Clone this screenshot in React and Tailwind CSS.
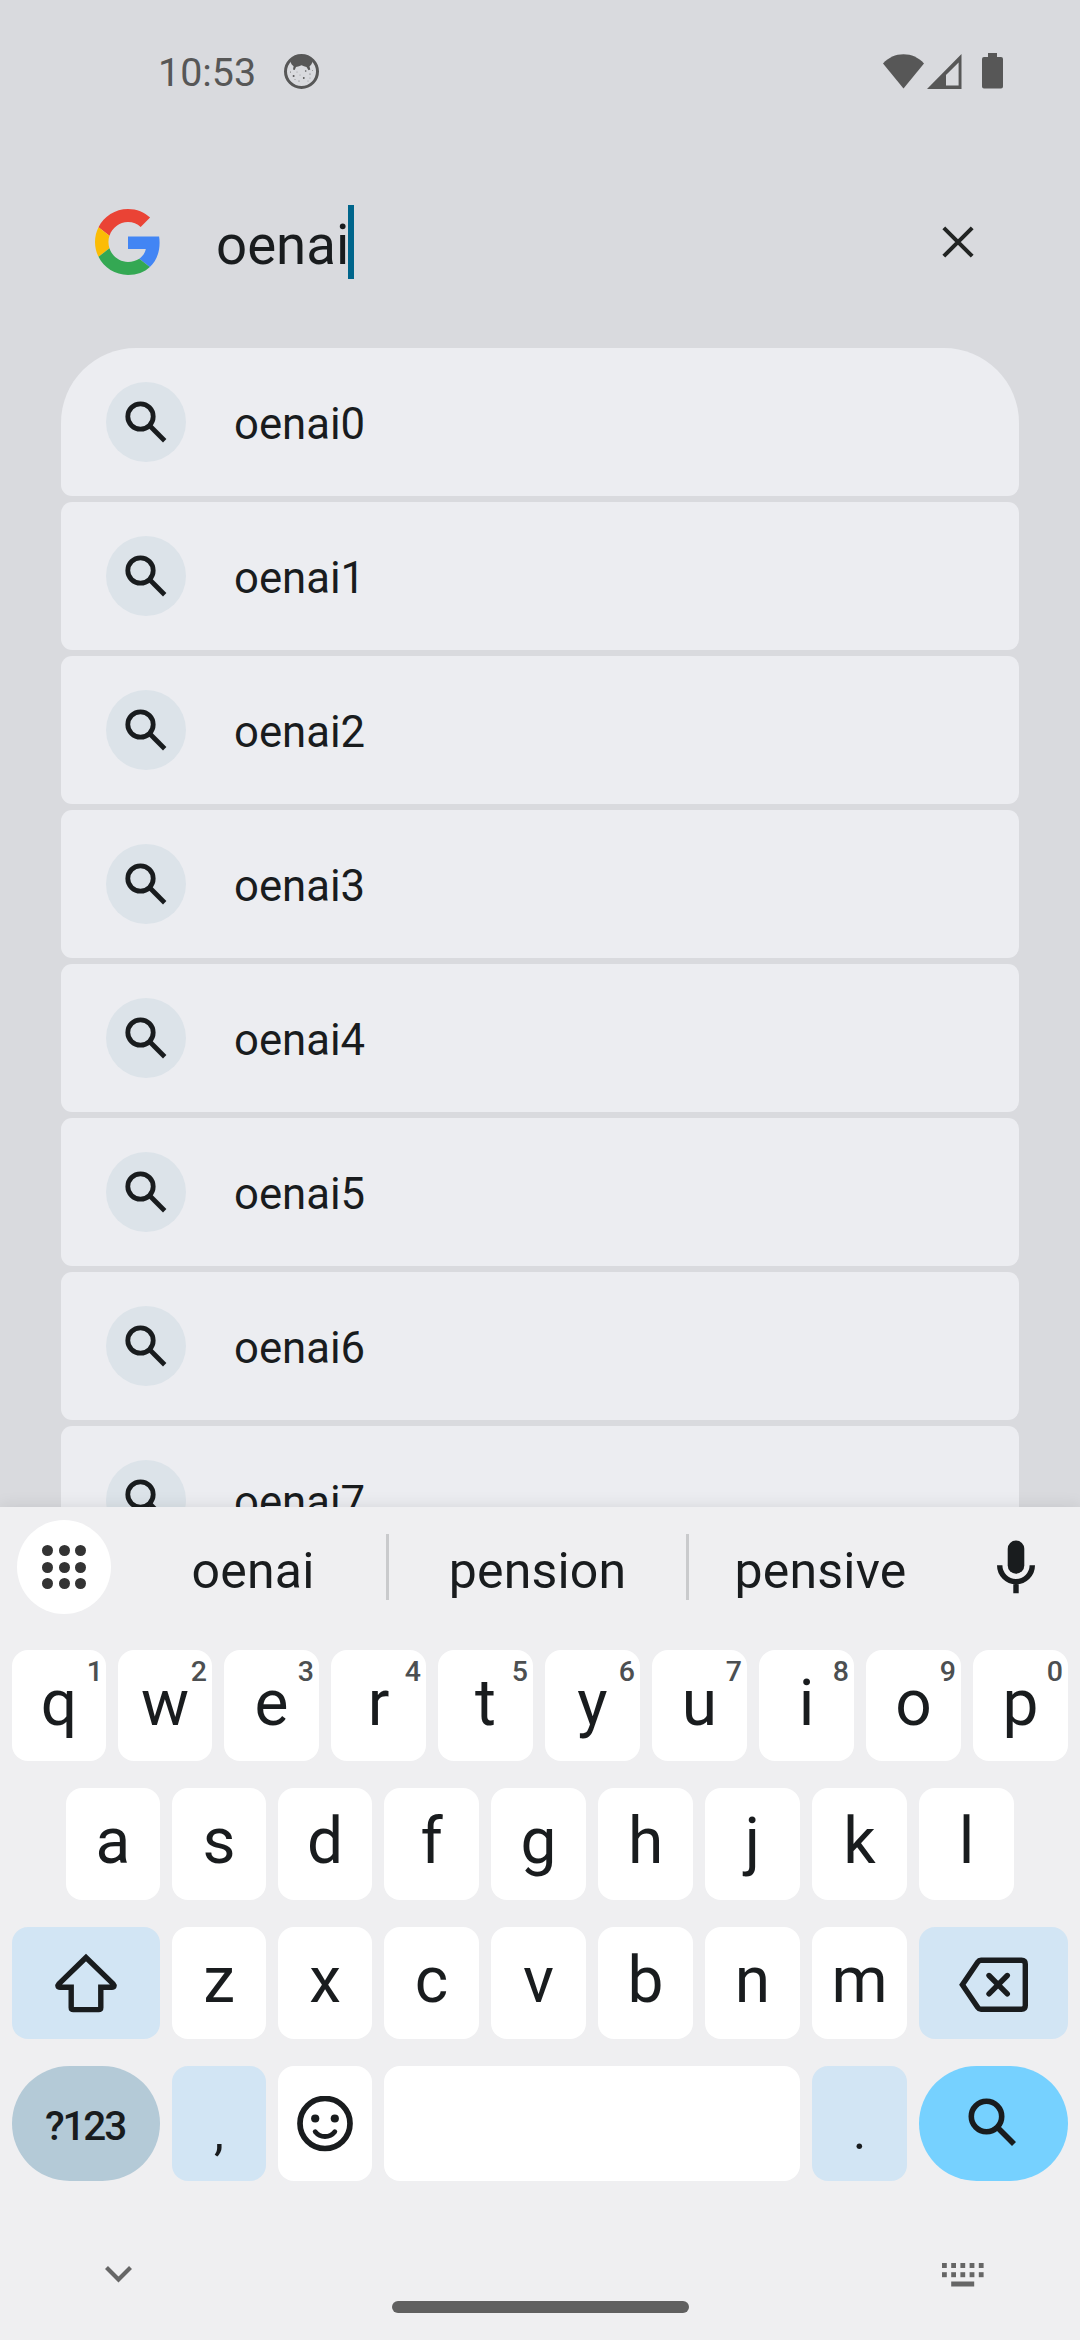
import React from "react";

const ink = "#191c1e";

const suggestions = ["oenai0", "oenai1", "oenai2", "oenai3", "oenai4", "oenai5", "oenai6", "oenai7"];

const topRow = [
  ["q", "1"], ["w", "2"], ["e", "3"], ["r", "4"], ["t", "5"],
  ["y", "6"], ["u", "7"], ["i", "8"], ["o", "9"], ["p", "0"],
];
const homeRow = ["a", "s", "d", "f", "g", "h", "j", "k", "l"];
const bottomRow = ["z", "x", "c", "v", "b", "n", "m"];

function StatusBar() {
  return (
    <div className="flex h-[142px] shrink-0 items-center pl-[158px] pr-[77px]">
      <span className="w-[126px] pt-[3px] text-[39.4px] leading-none text-[#575757]">10:53</span>
      <svg className="size-[35px]" viewBox="0 0 35 35">
        <circle cx="17.5" cy="17.5" r="16" fill="none" stroke="#575757" strokeWidth="3" />
        <path d="M6.500 8C9 3 13 1.500 17.500 1.500S26 3 28.500 8L27.300 10.500 25.500 12.500 26.300 15.500 24.500 16.200 22.500 13 20 12.200 17.500 11.200 15 12.200 12 13 10.700 16 9 15.500 9.600 12.200 7.700 10.500Z" fill="#575757" />
        <g fill="#575757">
          <circle cx="9.600" cy="22" r="1" /><circle cx="21.700" cy="17" r="0.800" />
          <circle cx="19.800" cy="24" r="0.900" /><circle cx="13" cy="18" r="0.400" />
          <circle cx="16" cy="21" r="0.400" /><circle cx="26" cy="20" r="0.600" />
          <circle cx="15" cy="27" r="0.500" /><circle cx="24" cy="27" r="0.400" />
          <circle cx="6.500" cy="18" r="0.500" /><circle cx="11" cy="25.500" r="0.400" />
          <circle cx="26" cy="24" r="0.400" /><circle cx="28.500" cy="16.500" r="0.400" />
        </g>
      </svg>
      <div className="grow" />
      <svg className="h-[35px] w-[41px]" viewBox="0 0 41 35" fill="#575757">
        <path d="M20.500 34.500 0 9.500C5.500 3.500 12.500 0.300 20.500 0.300S35.500 3.500 41 9.500Z" />
      </svg>
      <svg className="ml-[3px] h-[35px] w-[35px]" viewBox="0 0 35 35" fill="#575757">
        <path fillRule="evenodd" d="M34.500 0V35H0ZM31.600 8.500 19 21V31.500H31.600Z" />
      </svg>
      <svg className="ml-5 h-9 w-[21px]" viewBox="0 0 21 36" fill="#575757">
        <path d="M6 0h9v4h4a2 2 0 0 1 2 2v27.500a2 2 0 0 1-2 2H2a2 2 0 0 1-2-2V6a2 2 0 0 1 2-2h4z" />
      </svg>
    </div>
  );
}

function GoogleLogo() {
  return (
    <svg className="size-[66px]" viewBox="0 0 48 48">
      <path fill="#EA4335" d="M24 9.500c3.540 0 6.710 1.220 9.210 3.600l6.850-6.850C35.900 2.380 30.470 0 24 0 14.620 0 6.510 5.380 2.560 13.220l7.980 6.190C12.430 13.720 17.740 9.500 24 9.500z" />
      <path fill="#4285F4" d="M46.980 24.550c0-1.570-.15-3.090-.38-4.550H24v9.020h12.940c-.58 2.960-2.260 5.480-4.780 7.180l7.730 6c4.510-4.180 7.090-10.360 7.090-17.650z" />
      <path fill="#FBBC05" d="M10.530 28.590c-.48-1.450-.76-2.990-.76-4.590s.27-3.140.76-4.590l-7.980-6.190C.92 16.460 0 20.120 0 24c0 3.880.92 7.540 2.560 10.780l7.970-6.190z" />
      <path fill="#34A853" d="M24 48c6.480 0 11.930-2.130 15.890-5.810l-7.730-6c-2.150 1.450-4.920 2.300-8.160 2.300-6.260 0-11.570-4.220-13.470-9.910l-7.980 6.190C6.510 42.620 14.620 48 24 48z" />
    </svg>
  );
}

function SearchBar() {
  return (
    <div className="mb-[6px] flex h-[200px] shrink-0 items-center pl-[95px] pr-[106px]">
      <GoogleLogo />
      <div className="ml-[55px] flex grow items-center">
        <span className="pt-[7px] text-[54.6px] leading-none text-[#191c1e]">oenai</span>
        <span className="-ml-px h-[74px] w-[6px] bg-[#00658b]" />
      </div>
      <svg className="mb-px size-8" viewBox="0 0 32 32" stroke="#222423" strokeWidth="4">
        <path d="M1.800 1.800 30.200 30.200M30.200 1.800 1.800 30.200" />
      </svg>
    </div>
  );
}

function Suggestion({ text, first }) {
  return (
    <div className={`flex h-[148px] shrink-0 items-center bg-[#ecedf1] pl-[45px] ${first ? "rounded-b-[11px] rounded-t-[75px]" : "rounded-[11px]"}`}>
      <div className="flex size-20 items-center justify-center rounded-full bg-[#dce3e9]">
        <svg className="size-[42px]" viewBox="0 0 42 42" fill="none" stroke={ink} strokeWidth="4.800">
          <circle cx="15.500" cy="15.500" r="12.700" />
          <path d="M24.500 24.500 39.700 39.700" />
        </svg>
      </div>
      <span className="ml-12 pt-[6px] text-[43.700px] leading-none text-[#191c1e]">{text}</span>
    </div>
  );
}

function SuggestionStrip() {
  const word = "flex items-center justify-center pt-2 text-[50px] leading-none tracking-[0.2px] text-[#191c1e]";
  return (
    <div className="flex h-[120px] shrink-0 items-center pl-[17px]">
      <div className="mr-[9px] flex size-[94px] items-center justify-center rounded-full bg-white">
        <div className="grid grid-cols-3 gap-[5.5px]">
          {Array.from({ length: 9 }, (_, i) => (
            <span key={i} className="size-[11px] rounded-full bg-[#333333]" />
          ))}
        </div>
      </div>
      <div className={`w-[266px] ${word}`}>oenai</div>
      <div className="h-[66px] w-[3px] bg-[#c9cacc]" />
      <div className={`w-[297px] ${word}`}>pension</div>
      <div className="h-[66px] w-[3px] bg-[#c9cacc]" />
      <div className={`w-[263px] ${word}`}>pensive</div>
      <svg className="ml-[45px] h-[54px] w-[38px]" viewBox="0 0 38 54" fill="none" stroke={ink}>
        <rect x="10.700" y="0.500" width="16.600" height="33.300" rx="8.300" fill={ink} stroke="none" />
        <path d="M2.700 25.300a16.300 16.300 0 0 0 32.600 0M19 41v12.300" strokeWidth="5.400" />
      </svg>
    </div>
  );
}

function LetterKey({ label, hint, narrow }) {
  return (
    <div className={`relative flex shrink-0 items-center justify-center rounded-2xl bg-white ${narrow ? "w-[94px]" : "w-[95px]"}`}>
      <span className="-mt-1 text-[64px] leading-none text-[#191c1e]">{label}</span>
      {hint && (
        <span className={`absolute top-2 text-[28.500px] font-medium leading-none text-[#4c4f51] ${hint === "1" ? "right-[3px]" : "right-[5px]"}`}>{hint}</span>
      )}
    </div>
  );
}

function Keyboard() {
  return (
    <div className="relative flex grow flex-col bg-[#efeff1] shadow-[0_0_16px_rgba(0,0,0,0.1)]">
      <SuggestionStrip />
      <div className="mt-[23px] flex h-[111px] gap-3 px-3">
        {topRow.map(([label, hint], i) => <LetterKey key={label} label={label} hint={hint} narrow={i < 2} />)}
      </div>
      <div className="mt-[27px] flex h-[112px] gap-3 px-[66px]">
        {homeRow.map((label, i) => <LetterKey key={label} label={label} narrow={i < 3} />)}
      </div>
      <div className="mt-[27px] flex h-[112px] gap-3 px-3">
        <div className="flex w-[148px] items-center justify-center rounded-2xl bg-[#d2e5f4]">
          <svg className="h-[60px] w-16" viewBox="0 0 64 60" fill="none" stroke={ink} strokeWidth="5.400">
            <path d="M32 4.500 4.900 30.800C3 32.800 4 34.300 6 34.300H17.200V54.500Q17.200 56.600 19.300 56.600H44.700Q46.800 56.600 46.800 54.500V34.300H58C60 34.300 61 32.800 59.100 30.800Z" />
          </svg>
        </div>
        {bottomRow.map((label, i) => <LetterKey key={label} label={label} narrow={i < 2} />)}
        <div className="flex w-[149px] items-center justify-center rounded-2xl bg-[#d2e5f4] pt-1">
          <svg className="h-14 w-[70px]" viewBox="0 0 70 56" fill="none" stroke={ink} strokeWidth="5.400">
            <path d="M22 3.200H62.500Q66.300 3.200 66.300 7V48.500Q66.300 52.300 62.500 52.300H22Q20 52.300 18.800 50.500L3.400 27.700 18.800 5Q20 3.200 22 3.200Z" />
            <path d="M30 18.500 48.300 36.900M48.300 18.500 30 36.900" strokeLinecap="round" />
          </svg>
        </div>
      </div>
      <div className="mt-[27px] flex h-[115px] gap-3 px-3">
        <div className="flex w-[148px] items-center justify-center rounded-full bg-[#b4cad7]">
          <span className="-ml-[2px] pt-[5px] text-[40.500px] font-medium leading-none tracking-[-2.200px] text-[#191c1e]">?123</span>
        </div>
        <div className="flex w-[94px] items-center justify-center rounded-2xl bg-[#d2e5f4]">
          <span className="pt-[17px] text-[50px] leading-none text-[#191c1e]">,</span>
        </div>
        <div className="flex w-[94px] items-center justify-center rounded-2xl bg-white">
          <svg className="size-14" viewBox="0 0 56 56" fill="none" stroke={ink}>
            <circle cx="28" cy="27.500" r="25" strokeWidth="5.700" />
            <circle cx="18.200" cy="22.500" r="4.100" fill={ink} stroke="none" />
            <circle cx="37.800" cy="22.500" r="4.100" fill={ink} stroke="none" />
            <path d="M18.200 35.700Q22 40.500 28 40.500T37.800 35.700" strokeWidth="4.800" strokeLinecap="round" />
          </svg>
        </div>
        <div className="w-[416px] rounded-2xl bg-white" />
        <div className="flex w-[95px] items-center justify-center rounded-2xl bg-[#d2e5f4]">
          <span className="pt-[17px] text-[50px] leading-none text-[#191c1e]">.</span>
        </div>
        <div className="flex w-[149px] items-center justify-center rounded-full bg-[#76d1ff] pb-[3px] pr-[2px]">
          <svg className="size-[49px]" viewBox="0 0 49 49" fill="none" stroke={ink} strokeWidth="5.600">
            <circle cx="18.500" cy="18.500" r="15.200" />
            <path d="M30.300 30.300 46 46" />
          </svg>
        </div>
      </div>
      <div className="mt-[81px] flex h-6 items-start justify-between pl-[105px] pr-24">
        <svg className="mt-1 h-[17px] w-[27px]" viewBox="0 0 27 17" fill="none" stroke="#666666" strokeWidth="4.200">
          <path d="M1.500 1.500 13.500 13.500 25.500 1.500" />
        </svg>
        <svg className="mt-px h-6 w-[42px]" viewBox="0 0 42 24" fill="#666666">
          {[0, 9.2, 18.4, 27.6, 36.8].map((x) => (
            <React.Fragment key={x}>
              <rect x={x} y="0" width="4.800" height="5" />
              <rect x={x} y="9.200" width="4.800" height="5" />
            </React.Fragment>
          ))}
          <rect x="9.200" y="18.500" width="23" height="5" />
        </svg>
      </div>
      <div className="mt-[15px] h-3 w-[297px] self-center rounded-full bg-[#606060]" />
    </div>
  );
}

export default function App() {
  return (
    <div className="flex h-[2340px] w-[1080px] flex-col overflow-hidden bg-[#d9dade] font-['Roboto',sans-serif]">
      <div className="flex h-[1507px] shrink-0 flex-col overflow-hidden">
        <StatusBar />
        <SearchBar />
        <div className="mx-[61px] flex flex-col gap-[6px]">
          {suggestions.map((text, i) => <Suggestion key={text} text={text} first={i === 0} />)}
        </div>
      </div>
      <Keyboard />
    </div>
  );
}
